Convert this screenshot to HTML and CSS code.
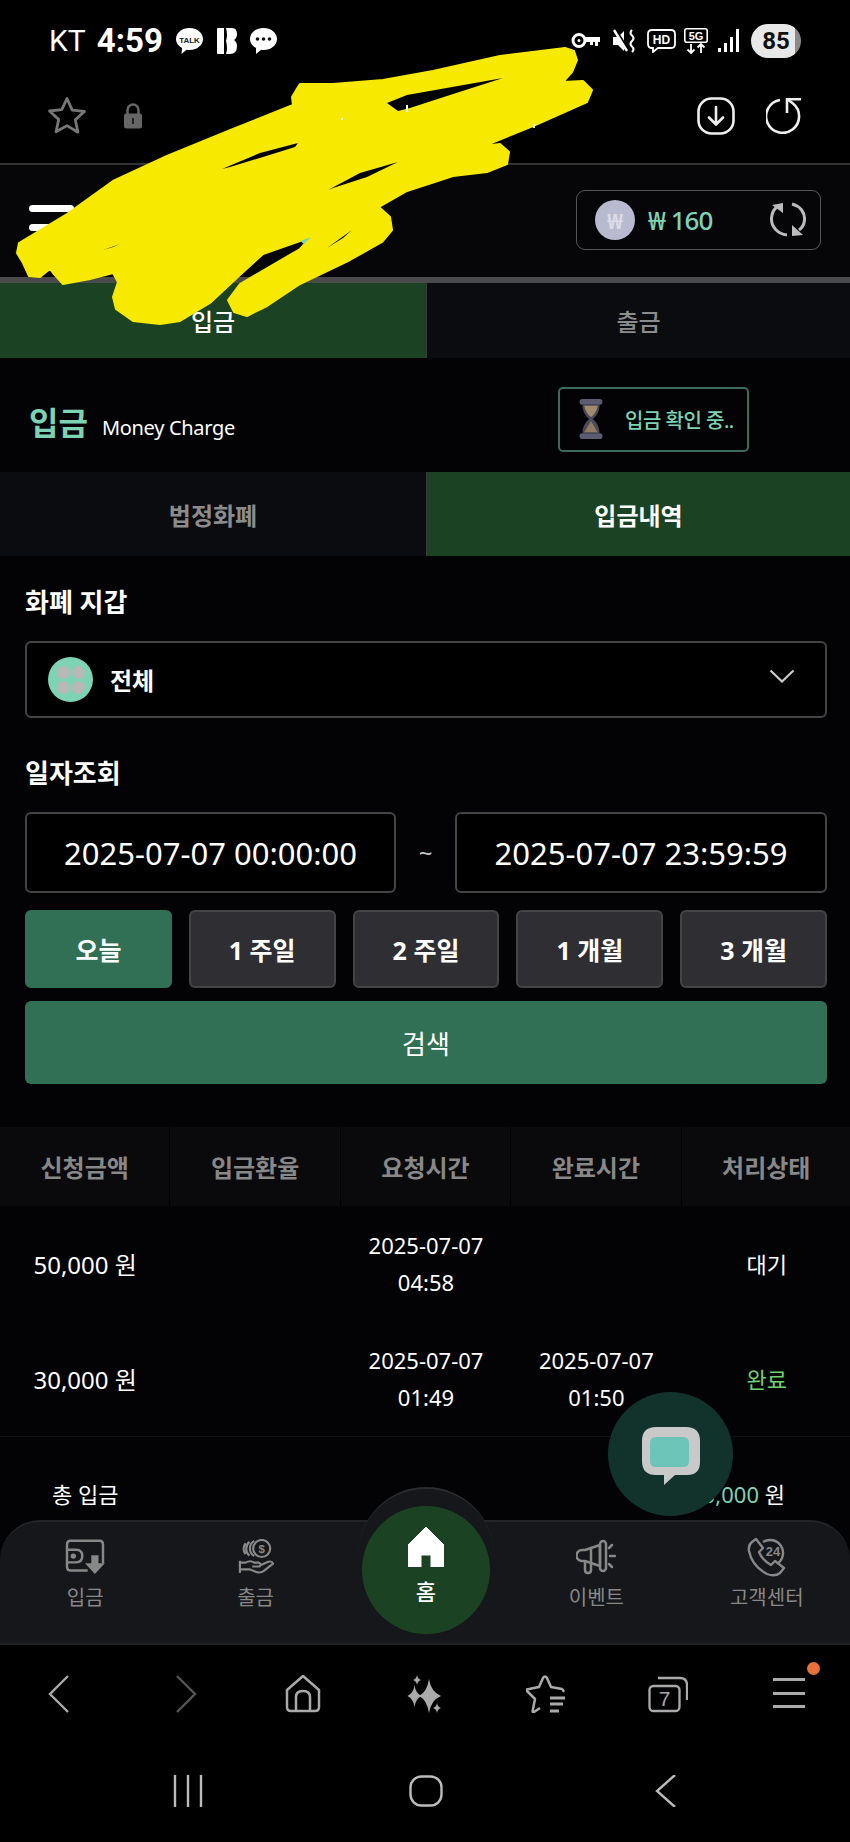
FILE: index.html
```html
<!DOCTYPE html>
<html lang="ko">
<head>
<meta charset="utf-8">
<title>입금</title>
<link rel="stylesheet" href="styles.css">
</head>
<body>
<div class="phone">
  <div class="status">
    <div class="status-left">
      <span class="carrier">KT</span>
      <span class="clock">4:59</span>
      <svg class="ico-talk" viewBox="0 0 29 28"><path d="M14.500 1C22 1 28 5.800 28 12S22 23 14.500 23c-1 0-2-.1-3-.3L6.500 27l.6-6C3.400 19 1 15.700 1 12 1 5.800 7 1 14.500 1z" fill="#fff"/><text x="14.500" y="15.500" class="talk-text">TALK</text></svg>
      <svg class="ico-b" viewBox="0 0 22 28"><path d="M1 2q0-1 1-1h6v26H2q-1 0-1-1zM10 1h6q5 0 5 6 0 4-3 6 3 2 3 6 0 8-7 8h-4q2-6 0-13 2-6 0-13z" fill="#fff"/></svg>
      <svg class="ico-msg" viewBox="0 0 29 28"><path d="M14.500 1C22 1 28 5.800 28 12S22 23 14.500 23c-.8 0-1.500 0-2.300-.2L7 27v-6C3.500 19 1 15.700 1 12 1 5.800 7 1 14.500 1z" fill="#fff"/><circle cx="8.500" cy="12" r="1.800" fill="#111"/><circle cx="14.500" cy="12" r="1.800" fill="#111"/><circle cx="20.500" cy="12" r="1.800" fill="#111"/></svg>
    </div>
    <div class="status-right">
      <svg class="ico-key" viewBox="0 0 30 17"><circle cx="8" cy="8.500" r="6" fill="none" stroke="#fff" stroke-width="3"/><circle cx="8" cy="8.500" r="1.500" fill="#fff"/><path d="M14 5h15v5h-2v4h-3v-4h-2v3h-3v-3h-5z" fill="#fff"/></svg>
      <svg class="ico-mute" viewBox="0 0 24 24"><path d="M1 8h5l6-6v20l-6-6H1z" fill="#fff"/><path d="M4 2l13 20" stroke="#000" stroke-width="3"/><path d="M2 1l13 21" stroke="#fff" stroke-width="2.400"/><path d="M20 1q-3 3 0 5.500t0 5.500 0 5.500 0 5.500" fill="none" stroke="#fff" stroke-width="2.200"/></svg>
      <svg class="ico-hd" viewBox="0 0 29 24"><path d="M5 1h19q4 0 4 4v10q0 4-4 4H11l-5 4v-4H5q-4 0-4-4V5q0-4 4-4z" fill="none" stroke="#fff" stroke-width="1.800"/><text x="14.500" y="15" class="hd-text">HD</text></svg>
      <svg class="ico-5g" viewBox="0 0 24 26"><rect x=".8" y=".8" width="22.400" height="13.400" rx="2" fill="none" stroke="#fff" stroke-width="1.600"/><text x="12" y="12" class="g-text">5G</text><path d="M7 16v9M3.500 21.500L7 25l3.500-3.500M17 25v-9M13.500 19.500L17 16l3.500 3.500" fill="none" stroke="#fff" stroke-width="1.800"/></svg>
      <svg class="ico-signal" viewBox="0 0 22 23"><rect x="0" y="19" width="3" height="4" fill="#fff"/><rect x="6" y="14" width="3" height="9" fill="#fff"/><rect x="12" y="8" width="3" height="15" fill="#fff"/><rect x="18" y="0" width="3" height="23" fill="#fff"/></svg>
      <div class="battery"><span class="battery-num">85</span></div>
    </div>
  </div>

  <div class="urlbar">
    <svg class="ico-star" viewBox="0 0 40 40"><path d="M20 2.500l5.200 11.600 12.300 1.300-9.200 8.400 2.600 12.400L20 29.600 9.100 35.800l2.600-12.400-9.200-8.400 12.300-1.300z" fill="none" stroke="#777" stroke-width="2.800" stroke-linejoin="round"/></svg>
    <svg class="ico-lock" viewBox="0 0 20 26"><path d="M4.500 11V7a5.500 5.500 0 0 1 11 0v4" fill="none" stroke="#666" stroke-width="2.500"/><rect x="1" y="10.500" width="18" height="15" rx="2.500" fill="#666"/><rect x="9" y="15" width="2" height="6" fill="#222"/></svg>
    <div class="url-spacer"></div>
    <svg class="ico-down" viewBox="0 0 38 38"><rect x="1.500" y="1.500" width="35" height="35" rx="13" fill="none" stroke="#eee" stroke-width="2.600"/><path d="M19 10v17M12 20.500l7 7 7-7" fill="none" stroke="#eee" stroke-width="2.600" stroke-linecap="round" stroke-linejoin="round"/></svg>
    <svg class="ico-reload" viewBox="0 0 36 36"><path d="M14 2A16.500 16.500 0 1 0 27 5.500L21 1" fill="none" stroke="#eee" stroke-width="2.600"/><path d="M35 1.300H21V15" fill="none" stroke="#eee" stroke-width="2.600"/></svg>
  </div>

  <div class="app">
    <header class="app-header">
      <div class="burger"><span></span><span></span></div>
      <div class="balance">
        <div class="coin">₩</div>
        <span class="amount">₩ 160</span>
        <svg class="ico-sync" viewBox="0 0 36 36">
          <path d="M17 33C8 32 1 25 1.500 16 2 11 4 7 7 5M22 2C30 4 35 10 34.500 18 34 23 32 26 29 28" fill="none" stroke="#bbb" stroke-width="3"/>
          <path d="M2 3L13 1V11zM22 23L33 33 22 34z" fill="#bbb"/>
        </svg>
      </div>
    </header>
    <div class="tabs main-tabs">
      <div class="tab active">입금</div>
      <div class="tab">출금</div>
    </div>
    <div class="title-row">
      <h1 class="title">입금</h1>
      <span class="subtitle">Money Charge</span>
      <div class="pending">
        <svg class="ico-hourglass" viewBox="0 0 28 44"><rect x="2" y="1" width="24" height="6" rx="3" fill="#5c5c70"/><rect x="2" y="37" width="24" height="6" rx="3" fill="#5c5c70"/><path d="M5 7h18q0 9-7 15 7 6 7 15H5q0-9 7-15-7-6-7-15z" fill="#4a4a58"/><path d="M7 8h14q-1 7-7 12-6-5-7-12z" fill="#a08c6c"/><path d="M14 24l-7 12h14z" fill="#8f7c60"/></svg>
        <span class="pending-text">입금 확인 중..</span>
      </div>
    </div>
    <div class="tabs sub-tabs">
      <div class="tab">법정화폐</div>
      <div class="tab active">입금내역</div>
    </div>

    <section class="form">
      <div class="label first">화폐 지갑</div>
      <div class="select">
        <div class="all-icon"><i></i><i></i><i></i><i></i></div>
        <span class="select-text">전체</span>
        <svg class="ico-chevron" viewBox="0 0 26 14"><path d="M1.500 1.500L13 12.500 24.500 1.500" fill="none" stroke="#ccc" stroke-width="2.200"/></svg>
      </div>
      <div class="label">일자조회</div>
      <div class="dates">
        <div class="date">2025-07-07 00:00:00</div>
        <span class="tilde">~</span>
        <div class="date">2025-07-07 23:59:59</div>
      </div>
      <div class="quick">
        <div class="qbtn on">오늘</div>
        <div class="qbtn">1 주일</div>
        <div class="qbtn">2 주일</div>
        <div class="qbtn">1 개월</div>
        <div class="qbtn">3 개월</div>
      </div>
      <div class="search">검색</div>
    </section>

    <div class="table">
      <div class="thead">
        <div class="th">신청금액</div>
        <div class="th">입금환율</div>
        <div class="th">요청시간</div>
        <div class="th">완료시간</div>
        <div class="th">처리상태</div>
      </div>
      <div class="tr">
        <div class="td amt">50,000 원</div>
        <div class="td"></div>
        <div class="td">2025-07-07<br>04:58</div>
        <div class="td"></div>
        <div class="td">대기</div>
      </div>
      <div class="tr line">
        <div class="td amt">30,000 원</div>
        <div class="td"></div>
        <div class="td">2025-07-07<br>01:49</div>
        <div class="td">2025-07-07<br>01:50</div>
        <div class="td done">완료</div>
      </div>
      <div class="total">
        <span class="total-label">총 입금</span>
        <span class="total-value"><b>30,000</b> 원</span>
      </div>
    </div>

    <div class="chat">
      <svg class="ico-chat" viewBox="0 0 58 58"><path d="M14 0h30q14 0 14 14v21q0 13-13 13H33L22 58V48h-8Q0 48 0 34V14Q0 0 14 0z" fill="#c9c9c9"/><path d="M14 10h27q6 0 6 6v18q0 6-6 6H14q-6 0-6-6V16q0-6 6-6z" fill="#6cc5b8"/></svg>
    </div>

    <nav class="nav">
      <div class="nav-arc"></div>
      <div class="nav-item">
        <svg class="nav-ico" viewBox="0 0 44 40"><path d="M25 35H6q-4 0-4-4V6q0-4 4-4h32q4 0 4 4v21" fill="none" stroke="#888" stroke-width="2.700"/><path d="M2 12h10q7 0 7 7t-7 7H2" fill="none" stroke="#888" stroke-width="2.700"/><circle cx="9" cy="19" r="3" fill="#888"/><path d="M29 18h8v9h7L33 39 22 27h7z" fill="#888"/></svg>
        <span>입금</span>
      </div>
      <div class="nav-item">
        <svg class="nav-ico coins" viewBox="0 0 38 38"><circle cx="25" cy="10" r="9" fill="none" stroke="#888" stroke-width="2.300"/><path d="M17 2a9.500 9.500 0 0 0 0 16M12 3a9.500 9.500 0 0 0 0 14.500M8 4.500a9 9 0 0 0 0 11.500" fill="none" stroke="#888" stroke-width="2.300"/><text x="25" y="14.500" class="dollar">$</text><path d="M2 23v13M2 25h6q5-3 9 0h5q3 1 1 4h-8M23 28l9-4q4-1 5 2l-10 8q-3 2-7 1l-8-3H2" fill="none" stroke="#888" stroke-width="2.300" stroke-linejoin="round"/></svg>
        <span>출금</span>
      </div>
      <div class="nav-home">
        <svg class="home-ico" viewBox="0 0 36 40"><path d="M18 0L36 18V40H23V28H13V40H0V18z" fill="#fff" stroke="#fff" stroke-linejoin="round"/></svg>
        <span>홈</span>
      </div>
      <div class="nav-item">
        <svg class="nav-ico" viewBox="0 0 40 36"><path d="M24 6L9 11H6a5.500 5.500 0 0 0 0 11h3l15 5z" fill="none" stroke="#888" stroke-width="2.500" stroke-linejoin="round"/><rect x="24" y="2" width="6" height="30" rx="3" fill="none" stroke="#888" stroke-width="2.500"/><path d="M9 22v9q0 3 3 3t3-3v-7M15 9v15" fill="none" stroke="#888" stroke-width="2.500"/><path d="M33 9l3-3M34 17h5M33 25l3 3" stroke="#888" stroke-width="2.500" stroke-linecap="round"/></svg>
        <span>이벤트</span>
      </div>
      <div class="nav-item">
        <svg class="nav-ico phone24" viewBox="0 0 40 40"><path d="M16 5A13 13 0 1 1 30 27" fill="none" stroke="#888" stroke-width="2.400"/><text x="26" y="19" class="h24">24</text><path d="M9 2L16 11 12 15Q15 23 24 28L28 24 37 31 33 36Q28 40 20 37 5 29 2 14 1 8 5 5z" fill="#15171a" stroke="#888" stroke-width="2.400" stroke-linejoin="round"/></svg>
        <span>고객센터</span>
      </div>
    </nav>
  </div>

  <div class="toolbar">
    <svg class="tb-ico" viewBox="0 0 36 38"><path d="M25 1L7 19l18 18" fill="none" stroke="#aaa" stroke-width="2.400"/></svg>
    <svg class="tb-ico" viewBox="0 0 36 38"><path d="M13 1l18 18-18 18" fill="none" stroke="#555" stroke-width="2.400"/></svg>
    <svg class="tb-ico" viewBox="0 0 36 38"><path d="M18 1L2 15v17q0 4 4 4h24q4 0 4-4V15z" fill="none" stroke="#aaa" stroke-width="2.500" stroke-linejoin="round"/><path d="M11 36V22q0-6 7-6t7 6v14" fill="none" stroke="#aaa" stroke-width="2.500"/></svg>
    <svg class="tb-ico" viewBox="0 0 36 38"><path d="M22 4q2 13 12 17-10 4-12 17-2-13-10-17 8-4 10-17zM7.500 10q1 8 7 11-6 3-7 11-1-8-7-11 6-3 7-11zM10 0q.6 4 4 5-3.400 1-4 5-.6-4-4-5 3.400-1 4-5zM30 28q.6 4 4 5-3.400 1-4 5-.6-4-4-5 3.400-1 4-5z" fill="#aaa"/></svg>
    <svg class="tb-ico wide" viewBox="0 0 40 38"><path d="M14 33L8 37Q6 38 7 34L9 24 1 16Q0 14 3 14L13 12 17 3Q19 0 21 3L25 12 36 14Q38 15 37 17" fill="none" stroke="#aaa" stroke-width="2.500" stroke-linejoin="round"/><path d="M24 23h15M24 29h13M24 36h9" stroke="#aaa" stroke-width="3"/></svg>
    <svg class="tb-ico wide" viewBox="0 0 40 36"><rect x="1.500" y="10" width="30" height="25" rx="4" fill="none" stroke="#aaa" stroke-width="2.300"/><path d="M10 2h22q7 0 7 7v15" fill="none" stroke="#aaa" stroke-width="2.300"/><text x="16.500" y="30" class="tab-num">7</text></svg>
    <div class="tb-menu"><span></span><span></span><span></span><i class="dot"></i></div>
  </div>
  <div class="sysnav">
    <svg class="sys-ico" viewBox="0 0 30 32"><path d="M2 0v32M15 0v32M28 0v32" stroke="#bbb" stroke-width="2.400"/></svg>
    <svg class="sys-ico" viewBox="0 0 34 32"><rect x="1.500" y="1.500" width="31" height="29" rx="11" fill="none" stroke="#bbb" stroke-width="2.400"/></svg>
    <svg class="sys-ico" viewBox="0 0 22 32"><path d="M20 0L2 16l18 16" fill="none" stroke="#bbb" stroke-width="2.400"/></svg>
  </div>

  <svg class="scribble" viewBox="0 0 850 340" aria-hidden="true">
    <path class="scribble-fill" d="M300 84L333 84 383 80 433 71 500 56 565 48 574 51 577 60 572 72 563 82 583 81 592 90 587 102 533 126 484 146 500 144 509 152 507 164 487 172 453 176 407 191 379 207 390 217 392 230 382 242 350 260 300 284 267 306 247 316 234 312 228 300 240 284 300 249 309 239 300 241 263 254 240 275 210 303 180 321 160 324 133 321 116 309 113 297 118 282 113 273 90 279 63 284 53 273 50 269 40 277 29 276 23 263 17 253 19 243 67 214 113 181 167 156 233 129 293 105 292 97 298 87Z"/>
    <path class="scribble-hole" d="M387 103L407 95 503 78 450 95 410 108 398 111Z"/>
    <path class="scribble-hole" d="M328 190L360 173 398 162 367 177 333 188Z"/>
    <path class="scribble-hole" d="M327 248L352 230 343 238Z"/>
    <path class="scribble-hole" d="M222 169L260 153 298 143 295 147 263 157 230 167Z"/>
    <path class="scribble-hole" d="M103 250L120 244 113 247Z"/>
    <path class="scribble-teal" d="M300 241L311 237 304 244Z"/>
    <path class="scribble-speck" d="M406 105h2v7h-2zM341 118h2v2h-2zM533 124h2v4h-2z"/>
  </svg>
</div>
</body>
</html>
```
FILE: styles.css
```css
* { box-sizing: border-box; }
html, body { margin: 0; padding: 0; background: #000; }
body { font-family: "Noto Sans", "Noto Sans CJK KR", sans-serif; color: #fff; }
.phone { position: relative; width: 850px; height: 1842px; display: flex; flex-direction: column; overflow: hidden; background: #000; }

/* status bar */
.status { height: 65px; flex: none; display: flex; justify-content: space-between; align-items: center; padding: 16px 49px 0 49px; }
.status-left, .status-right { display: flex; align-items: center; }
.carrier { font: 400 30px Roboto, sans-serif; margin-right: 11px; }
.clock { font: 700 33px Roboto, sans-serif; margin-right: 12px; }
.ico-talk { width: 29px; height: 28px; margin-right: 12px; }
.ico-b { width: 22px; height: 28px; margin-right: 11px; }
.ico-msg { width: 29px; height: 28px; }
.talk-text { font: 700 8px "Liberation Sans", sans-serif; fill: #222; text-anchor: middle; }
.ico-key { width: 30px; height: 17px; margin-right: 11px; }
.ico-mute { width: 24px; height: 24px; margin-right: 11px; }
.ico-hd { width: 29px; height: 24px; margin-right: 8px; }
.hd-text { font: 700 12px "Liberation Sans", sans-serif; fill: #fff; text-anchor: middle; }
.ico-5g { width: 24px; height: 26px; margin-right: 10px; }
.g-text { font: 700 11px "Liberation Sans", sans-serif; fill: #fff; text-anchor: middle; }
.ico-signal { width: 22px; height: 23px; margin-right: 11px; }
.battery { width: 50px; height: 34px; border-radius: 17px; background: linear-gradient(90deg, #e8e8e8 88%, #8a8a8a 88%); display: flex; align-items: center; justify-content: center; }
.battery-num { font: 700 24px Roboto, sans-serif; color: #111; }

/* browser url bar */
.urlbar { height: 98px; flex: none; display: flex; align-items: center; padding: 4px 48px 0 47px; }
.ico-star { width: 40px; height: 40px; margin-right: 36px; }
.ico-lock { width: 20px; height: 26px; }
.url-spacer { flex: 1; }
.ico-down { width: 38px; height: 38px; margin-right: 31px; }
.ico-reload { width: 36px; height: 36px; }

/* app */
.app { position: relative; height: 1480px; flex: none; overflow: hidden; background: #030305; }
.app-header { height: 120px; display: flex; align-items: center; justify-content: space-between; padding: 0 29px 0 29px; background: #060608; border-top: 2px solid #333; border-bottom: 6px solid #4a4a4c; }
.burger { width: 45px; display: flex; flex-direction: column; gap: 12px; margin-top: -6px; }
.burger span { display: block; height: 7px; border-radius: 4px; background: #fff; }
.balance { width: 245px; height: 60px; margin-top: -2px; display: flex; align-items: center; padding: 0 14px 0 18px; border: 1px solid #555; border-radius: 9px; }
.coin { width: 40px; height: 40px; border-radius: 50%; background: #b9b9d0; color: #dcdce8; font-size: 22px; font-weight: 700; display: flex; align-items: center; justify-content: center; }
.amount { margin-left: 13px; color: #7dd3b3; font-size: 26px; font-weight: 500; flex: 1; letter-spacing: -1px; }
.ico-sync { width: 36px; height: 36px; }

.tabs { display: grid; grid-template-columns: 426px 424px; }
.tab { display: flex; align-items: center; justify-content: center; background: #0b0c10; color: #8c8c8c; font-size: 24px; font-weight: 700; }
.tab + .tab { border-left: 1px solid #3a3a3a; }
.tab.active { background: #1c4224; color: #fff; }
.main-tabs { height: 75px; }
.main-tabs .tab { font-weight: 500; }
.sub-tabs { height: 84px; }

.title-row { height: 114px; display: flex; align-items: center; padding: 0 101px 0 29px; }
.title { margin: 16px 0 0; color: #7dd3b3; font-size: 32px; font-weight: 700; line-height: 1; }
.subtitle { margin: 24px 0 0 14px; font-size: 20px; letter-spacing: -.3px; flex: 1; }
.pending { width: 191px; height: 65px; display: flex; align-items: center; padding: 0 8px 0 17px; border: 2px solid #3c6a5c; border-radius: 5px; margin-top: 8px; }
.ico-hourglass { width: 28px; height: 42px; margin-right: 20px; }
.pending-text { color: #7dd3b3; font-size: 20px; font-weight: 500; white-space: nowrap; letter-spacing: -.5px; }

/* form */
.form { padding: 0 23px 0 25px; }
.label { height: 36px; line-height: 36px; margin: 37px 0 21px; font-size: 26px; font-weight: 700; }
.label.first { margin-top: 28px; }
.select { height: 77px; display: flex; align-items: center; padding: 0 30px 0 21px; border: 2px solid #444; border-radius: 6px; background: #000; }
.all-icon { width: 45px; height: 45px; border-radius: 50%; background: #7dd3b3; display: grid; grid-template-columns: 13px 13px; grid-auto-rows: 13px; gap: 2px; justify-content: center; align-content: center; margin-right: 17px; }
.all-icon i { border-radius: 50%; background: #b8b8b8; }
.select-text { flex: 1; font-size: 24px; font-weight: 700; }
.ico-chevron { width: 26px; height: 14px; margin-top: -8px; }
.dates { display: grid; grid-template-columns: 371px 1fr 372px; align-items: center; }
.date { height: 81px; display: flex; align-items: center; justify-content: center; border: 2px solid #444; border-radius: 6px; background: #000; font-size: 31px; white-space: nowrap; }
.tilde { text-align: center; font-size: 24px; color: #ccc; }
.quick { display: grid; grid-template-columns: repeat(5, 1fr); gap: 17px; margin-top: 17px; }
.qbtn { height: 78px; display: flex; align-items: center; justify-content: center; border: 2px solid #444; border-radius: 6px; background: #2f2f33; font-size: 25px; font-weight: 700; }
.qbtn.on { background: #327055; border-color: #327055; }
.search { height: 83px; margin-top: 13px; display: flex; align-items: center; justify-content: center; border-radius: 6px; background: #327055; font-size: 26px; }

/* table */
.table { margin-top: 43px; }
.thead, .tr { display: grid; grid-template-columns: repeat(5, 170.4px); }
.thead { height: 79px; }
.th { display: flex; align-items: center; justify-content: center; background: #0a0a0d; color: #888; font-size: 24px; font-weight: 700; border-right: 1px solid #000; white-space: nowrap; }
.tr { height: 116px; }
.tr.line { border-bottom: 1px solid #111; height: 115px; }
.td { display: flex; align-items: center; justify-content: center; text-align: center; font-size: 22px; line-height: 37px; }
.td.amt { font-size: 24px; }
.done { color: #6ed06e; }
.total { height: 112px; display: flex; justify-content: space-between; align-items: center; padding: 0 65px 0 52px; }
.total-label { font-size: 22px; }
.total-value { font-size: 22px; }
.total-value b { color: #7dd3b3; font-weight: 400; }

.chat { position: absolute; left: 608px; top: 1229px; width: 125px; height: 124px; border-radius: 50%; background: #12332b; display: flex; align-items: center; justify-content: center; }
.ico-chat { width: 58px; height: 58px; margin-top: 4px; }

/* bottom app nav */
.nav { position: absolute; left: 0; right: 0; bottom: 0; height: 123px; display: grid; grid-template-columns: repeat(5, 170.4px); background: #15171a; border-top: 2px solid #222427; border-radius: 40px 40px 0 0; }
.nav-arc { position: absolute; left: 358px; top: -35px; width: 136px; height: 136px; border-radius: 50%; background: #15171a; border-top: 2px solid #2a2c2f; }
.nav-item { position: relative; display: flex; flex-direction: column; align-items: center; padding-top: 17px; color: #888; font-size: 20px; line-height: 28px; }
.nav-ico { width: 40px; height: 36px; margin-bottom: 9px; }
.nav-ico.coins { width: 36px; height: 36px; }
.nav-ico.phone24 { width: 40px; height: 40px; margin: -2px 0 7px; }
.nav-home { position: relative; width: 128px; height: 128px; margin: -16px 0 0 21px; border-radius: 50%; background: #1c4224; display: flex; flex-direction: column; align-items: center; padding-top: 21px; font-size: 22px; font-weight: 500; line-height: 28px; }
.home-ico { width: 36px; height: 40px; margin-bottom: 10px; }
.dollar { font: 700 12px "Liberation Sans", sans-serif; fill: #888; text-anchor: middle; }
.h24 { font: 700 13px "Liberation Sans", sans-serif; fill: #888; text-anchor: middle; }

/* browser toolbar */
.toolbar { height: 95px; flex: none; display: grid; grid-template-columns: repeat(7, 121.4px); align-items: start; padding: 30px 0 0 0; border-top: 2px solid #1f2124; justify-items: center; }
.tb-ico { width: 36px; height: 38px; }
.tb-ico.wide { width: 40px; }
.tab-num { font: 400 21px "Liberation Sans", sans-serif; fill: #aaa; text-anchor: middle; }
.tb-menu { position: relative; width: 32px; height: 33px; display: flex; flex-direction: column; justify-content: space-between; padding-top: 3px; }
.tb-menu span { display: block; height: 3px; background: #aaa; }
.dot { position: absolute; left: 34px; top: -13px; width: 13px; height: 13px; border-radius: 50%; background: #e8703a; }

/* system nav */
.sysnav { flex: 1; display: grid; grid-template-columns: 173px 30px 206px 34px 212px 22px; align-items: start; padding-top: 37px; }
.sys-ico { height: 32px; width: 100%; }
.sys-ico:nth-child(1) { grid-column: 2; }
.sys-ico:nth-child(2) { grid-column: 4; }
.sys-ico:nth-child(3) { grid-column: 6; }

/* yellow redaction over the screenshot */
.scribble { position: absolute; left: 0; top: 0; width: 850px; height: 340px; pointer-events: none; }
.scribble-fill { fill: #f7ea00; stroke: #f7ea00; stroke-width: 2; stroke-linejoin: round; }
.scribble-hole { fill: #030304; }
.scribble-teal { fill: #7dd3b3; }
.scribble-speck { fill: #fff; }
```
